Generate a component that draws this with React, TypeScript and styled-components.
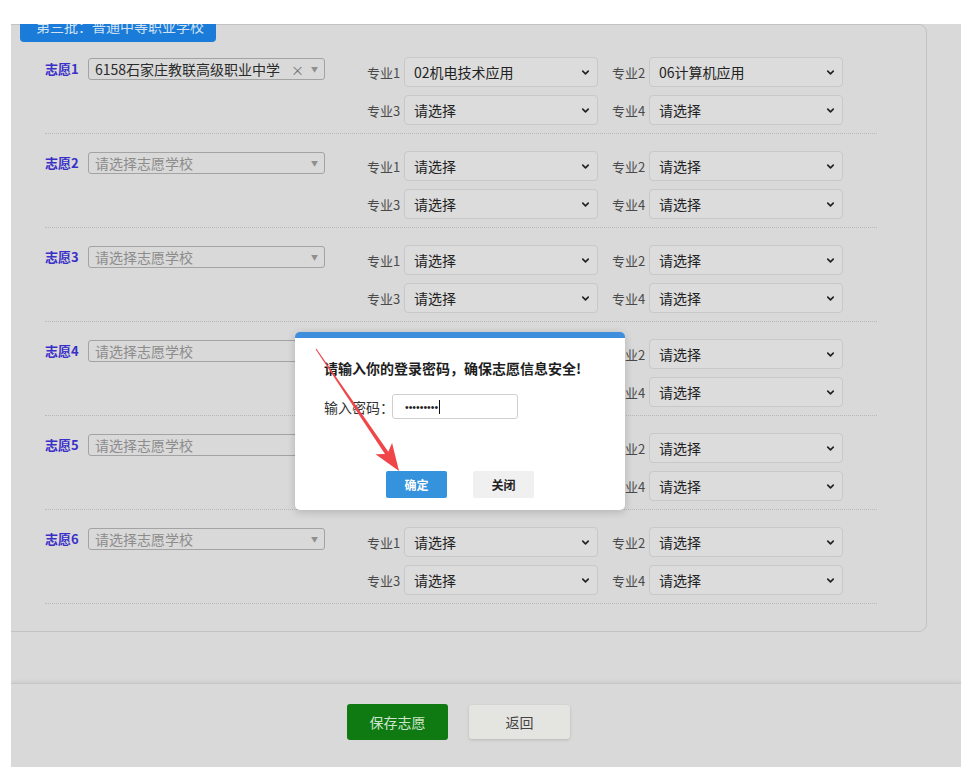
import React from 'react'
import styled, { createGlobalStyle } from 'styled-components'
import { ChevronDown } from 'lucide-react'

const GlobalStyle = createGlobalStyle`
  html, body {
    margin: 0;
    padding: 0;
    background: #fff;
  }
  body {
    font-family: "Noto Sans CJK SC", "Noto Sans", sans-serif;
  }
  * {
    box-sizing: border-box;
  }
`

const wishes = [
  { school: '6158石家庄教联高级职业中学', majors: ['02机电技术应用', '06计算机应用', '请选择', '请选择'] },
  { school: '', majors: ['请选择', '请选择', '请选择', '请选择'] },
  { school: '', majors: ['请选择', '请选择', '请选择', '请选择'] },
  { school: '', majors: ['请选择', '请选择', '请选择', '请选择'] },
  { school: '', majors: ['请选择', '请选择', '请选择', '请选择'] },
  { school: '', majors: ['请选择', '请选择', '请选择', '请选择'] },
]

const Page = styled.div`
  position: relative;
  width: 966px;
  height: 777px;
  padding: 24px 5px 10px 11px;
`

const Frame = styled.div`
  position: relative;
  width: 950px;
  height: 743px;
  overflow: hidden;
  background: #d9d9d9;
  display: flex;
  flex-direction: column;
`

const Panel = styled.div`
  margin-left: -10px;
  width: 926px;
  border: 1px solid #c2c2c2;
  border-radius: 8px;
  padding-bottom: 27px;
`

const BatchTab = styled.div`
  margin: -14px 0 -2px 18px;
  width: 196px;
  height: 31px;
  padding-left: 16px;
  line-height: 30px;
  font-size: 14px;
  color: #d2e2f3;
  background: #1a7bd8;
  border-radius: 4px;
`

const WishBlock = styled.div`
  margin-top: 17px;
`

const WishRow = styled.div`
  display: flex;
  align-items: flex-start;
  padding-left: 43px;
`

const WishLabel = styled.div`
  width: 33px;
  margin-top: 1px;
  line-height: 22px;
  font-size: 13px;
  font-weight: 700;
  color: #3a30c8;
  white-space: nowrap;
`

const SchoolSelect = styled.div<{ $empty: boolean }>`
  margin: 1px 0 0 10px;
  width: 237px;
  height: 22px;
  display: flex;
  align-items: center;
  padding: 0 6px;
  border: 1px solid #a3a3a3;
  border-radius: 3px;
  font-size: 14px;
  color: ${(p) => (p.$empty ? '#8c8c8c' : '#2b2b2b')};
  span:first-child {
    flex: 1;
    white-space: nowrap;
  }
`

const SchoolTools = styled.span`
  display: flex;
  align-items: center;
  gap: 7px;
  color: #6e6e6e;
  font-size: 13px;
  i {
    font-style: normal;
    font-size: 7px;
    color: #8f8f8f;
  }
`

const MajorGrid = styled.div`
  margin-left: 42px;
  display: grid;
  grid-template-columns: 231px 231px;
  grid-auto-rows: 30px;
  column-gap: 14px;
  row-gap: 8px;
`

const MajorCell = styled.label`
  display: flex;
  align-items: center;
  gap: 4px;
  font-size: 13px;
  color: #4a4a4a;
  white-space: nowrap;
  span {
    width: 33px;
  }
`

const SelectWrap = styled.div`
  position: relative;
  width: 194px;
  height: 30px;
  svg {
    position: absolute;
    right: 7px;
    top: 10px;
    color: #222;
    pointer-events: none;
  }
`

const MajorSelect = styled.select`
  appearance: none;
  width: 100%;
  height: 100%;
  padding: 0 0 0 9px;
  border: 1px solid #c8c8c8;
  border-radius: 4px;
  background: #dcdcdc;
  font-family: inherit;
  font-size: 14px;
  color: #222;
`

const Separator = styled.div`
  margin: 8px 49px 0 43px;
  border-top: 1px dotted #b9b9b9;
`

const Footer = styled.div`
  flex: 1;
  margin-top: 51px;
  border-top: 1px solid #c6c6c6;
  box-shadow: 0 -2px 3px rgba(0, 0, 0, 0.05);
  display: flex;
  align-items: center;
  align-items: flex-start;
  padding: 20px 0 0 336px;
  gap: 21px;
`

const FooterButton = styled.button<{ $primary?: boolean }>`
  width: 101px;
  height: ${(p) => (p.$primary ? '36px' : '34px')};
  margin-top: ${(p) => (p.$primary ? '0' : '1px')};
  border: none;
  border-radius: 3px;
  font-family: inherit;
  font-size: 14px;
  background: ${(p) => (p.$primary ? '#0f7a12' : '#e4e4e0')};
  color: ${(p) => (p.$primary ? '#cde6cd' : '#444')};
  box-shadow: ${(p) => (p.$primary ? 'none' : '0 1px 3px rgba(0,0,0,0.15)')};
`

const Dialog = styled.div`
  position: absolute;
  left: 284px;
  top: 308px;
  width: 330px;
  height: 178px;
  background: #fff;
  border-top: 6px solid #3d8fdd;
  border-radius: 5px;
  box-shadow: 0 2px 8px rgba(0, 0, 0, 0.18);
  padding: 20px 0 0 29px;
`

const DialogTitle = styled.div`
  font-size: 14px;
  font-weight: 700;
  line-height: 20px;
  color: #1e1e1e;
  white-space: nowrap;
`

const PasswordRow = styled.div`
  margin-top: 16px;
  display: flex;
  align-items: center;
  font-size: 14px;
  color: #333;
`

const PasswordBox = styled.div`
  width: 126px;
  height: 25px;
  margin-left: -2px;
  border: 1px solid #cfcfcf;
  border-radius: 3px;
  display: flex;
  align-items: center;
  padding-left: 12px;
  font-family: "Liberation Sans", sans-serif;
  font-size: 10.5px;
  color: #222;
  i {
    width: 1px;
    height: 14px;
    margin-left: 1px;
    background: #111;
  }
`

const DialogActions = styled.div`
  margin: 52px 0 0 -29px;
  display: flex;
  justify-content: center;
  gap: 26px;
`

const DialogButton = styled.button<{ $primary?: boolean }>`
  width: 61px;
  height: 27px;
  border: none;
  border-radius: 2px;
  font-family: inherit;
  font-size: 12px;
  font-weight: 700;
  background: ${(p) => (p.$primary ? '#3592dc' : '#f0f0f0')};
  color: ${(p) => (p.$primary ? '#fff' : '#222')};
`

const Annotation = styled.svg`
  position: absolute;
  left: 0;
  top: 0;
  pointer-events: none;
`

const RedArrow = () => {
  const x1 = 316
  const y1 = 349
  const x2 = 399
  const y2 = 471
  const len = Math.hypot(x2 - x1, y2 - y1)
  const angle = (Math.atan2(y2 - y1, x2 - x1) * 180) / Math.PI
  const pts = [
    [0, -0.5],
    [len - 22, -2],
    [len - 27, -10],
    [len, 0],
    [len - 27, 10],
    [len - 22, 2],
    [0, 0.5],
  ]
    .map((p) => p.join(','))
    .join(' ')
  return (
    <Annotation width={966} height={777}>
      <g transform={`translate(${x1} ${y1}) rotate(${angle})`}>
        <polygon points={pts} fill="#f0464a" />
      </g>
    </Annotation>
  )
}

export default function App() {
  return (
    <>
      <GlobalStyle />
      <Page>
        <Frame>
          <Panel>
            <BatchTab>第三批：普通中等职业学校</BatchTab>
            {wishes.map((w, i) => (
              <WishBlock key={i}>
                <WishRow>
                  <WishLabel>志愿{i + 1}</WishLabel>
                  <SchoolSelect $empty={!w.school}>
                    <span>{w.school || '请选择志愿学校'}</span>
                    <SchoolTools>
                      {w.school && <span>×</span>}
                      <i>▼</i>
                    </SchoolTools>
                  </SchoolSelect>
                  <MajorGrid>
                    {w.majors.map((m, j) => (
                      <MajorCell key={j}>
                        <span>专业{j + 1}</span>
                        <SelectWrap>
                          <MajorSelect defaultValue={m}>
                            <option>{m}</option>
                          </MajorSelect>
                          <ChevronDown size={11} strokeWidth={3.5} />
                        </SelectWrap>
                      </MajorCell>
                    ))}
                  </MajorGrid>
                </WishRow>
                <Separator />
              </WishBlock>
            ))}
          </Panel>
          <Footer>
            <FooterButton $primary>保存志愿</FooterButton>
            <FooterButton>返回</FooterButton>
          </Footer>
          <Dialog>
            <DialogTitle>请输入你的登录密码，确保志愿信息安全!</DialogTitle>
            <PasswordRow>
              输入密码：
              <PasswordBox>
                •••••••••
                <i />
              </PasswordBox>
            </PasswordRow>
            <DialogActions>
              <DialogButton $primary>确定</DialogButton>
              <DialogButton>关闭</DialogButton>
            </DialogActions>
          </Dialog>
        </Frame>
        <RedArrow />
      </Page>
    </>
  )
}
